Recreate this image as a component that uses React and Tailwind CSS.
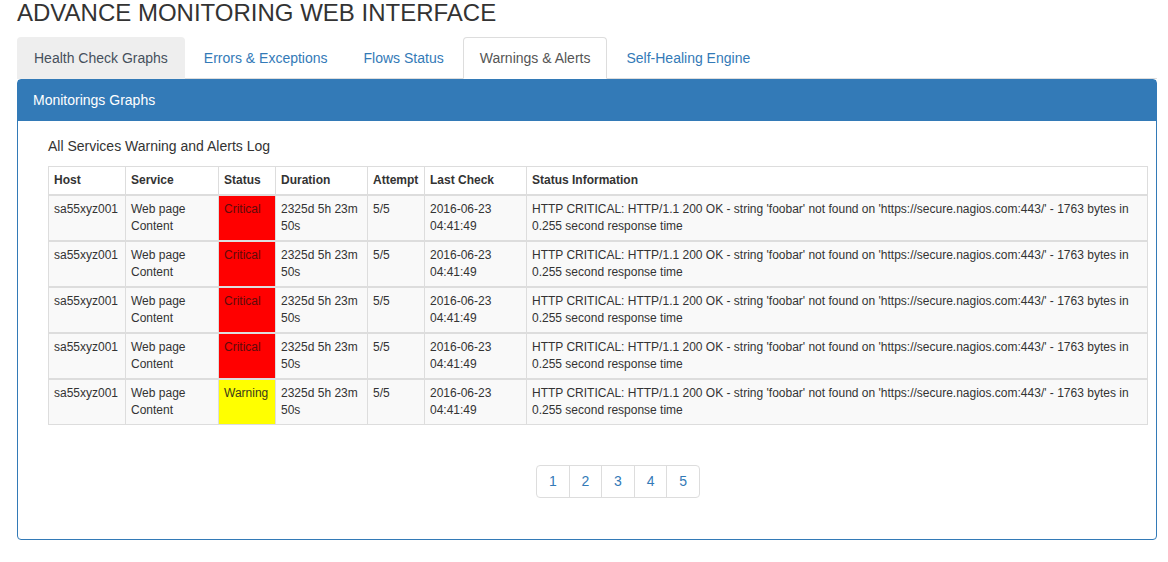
import React from "react";

// ===== Data =====
const tabs = [
  { name: "Health Check Graphs", state: "hover" },
  { name: "Errors & Exceptions" },
  { name: "Flows Status" },
  { name: "Warnings & Alerts", state: "active" },
  { name: "Self-Healing Engine" },
];

const columns = [
  { label: "Host", w: "w-[77px]" },
  { label: "Service", w: "w-[93px]" },
  { label: "Status", w: "w-[57px]" },
  { label: "Duration", w: "w-[92px]" },
  { label: "Attempt", w: "w-[57px]" },
  { label: "Last Check", w: "w-[102px]" },
  { label: "Status Information", w: "" },
];

const info =
  "HTTP CRITICAL: HTTP/1.1 200 OK - string 'foobar' not found on 'https://secure.nagios.com:443/' - 1763 bytes in 0.255 second response time";

const rows = [
  { status: "Critical" },
  { status: "Critical" },
  { status: "Critical" },
  { status: "Critical" },
  { status: "Warning" },
];

const Tab = ({ name, state }) => {
  if (state === "active") {
    return (
      <li className="mr-[2px] -mb-px">
        <div className="px-[16px] py-[10px] leading-5 bg-white text-[#555] border border-[#ddd] border-b-transparent rounded-t">
          {name}
        </div>
      </li>
    );
  }
  return (
    <li className="mr-[2px] -mb-px">
      <div
        className={`px-[16px] py-[10px] leading-5 border border-transparent rounded-t ${
          state === "hover" ? "bg-[#eee] text-[#46505c]" : "text-[#337ab7]"
        }`}
      >
        {name}
      </div>
    </li>
  );
};

export default function App() {
  return (
    <div
      className="bg-white min-h-[562px] pl-[17px] text-[14px] text-[#333]"
      style={{ fontFamily: '"Liberation Sans", Arial, sans-serif' }}
    >
      <h1 className="text-[24px] leading-[1.1] font-normal mb-[11px]">
        ADVANCE MONITORING WEB INTERFACE
      </h1>

      {/* Tabs */}
      <ul className="flex w-[1140px] border-b border-[#ddd]">
        {tabs.map((t) => (
          <Tab key={t.name} {...t} />
        ))}
      </ul>

      {/* Panel */}
      <div className="w-[1140px] border border-[#337ab7] rounded">
        <div className="bg-[#337ab7] text-white px-[15px] py-[10px] leading-5 border-b border-[#337ab7]">
          Monitorings Graphs
        </div>
        <div className="pt-[15px] pb-[41px] pl-[30px]">
          <div className="leading-5 mb-[10px]">All Services Warning and Alerts Log</div>

          <table className="w-[1100px] table-fixed border-collapse text-[12px] leading-[17px]">
            <thead>
              <tr className="bg-white">
                {columns.map((c) => (
                  <th
                    key={c.label}
                    className={`${c.w} text-left font-bold px-[5px] py-[5px] border border-[#ddd] border-b-2`}
                  >
                    {c.label}
                  </th>
                ))}
              </tr>
            </thead>
            <tbody>
              {rows.map((r, i) => (
                <tr key={i} className="bg-[#f9f9f9] align-top">
                  <td className="px-[5px] py-[5px] border border-[#ddd] border-t-2">sa55xyz001</td>
                  <td className="px-[5px] py-[5px] border border-[#ddd] border-t-2">Web page Content</td>
                  <td
                    className={`px-[5px] py-[5px] border border-[#ddd] border-t-2 ${
                      r.status === "Critical" ? "bg-[#ff0000] text-[#5e0b0b]" : "bg-[#ffff00] text-[#3a3a1a]"
                    }`}
                  >
                    {r.status}
                  </td>
                  <td className="px-[5px] py-[5px] border border-[#ddd] border-t-2">2325d 5h 23m 50s</td>
                  <td className="px-[5px] py-[5px] border border-[#ddd] border-t-2">5/5</td>
                  <td className="px-[5px] py-[5px] border border-[#ddd] border-t-2">2016-06-23 04:41:49</td>
                  <td className="px-[5px] py-[5px] border border-[#ddd] border-t-2">{info}</td>
                </tr>
              ))}
            </tbody>
          </table>

          {/* Pagination */}
          <ul className="flex mt-[40px] ml-[488px]">
            {[1, 2, 3, 4, 5].map((n, i) => (
              <li key={n}>
                <div
                  className={`w-[33.6px] h-[33px] flex items-center justify-center text-[#337ab7] border border-[#ddd] ${
                    i > 0 ? "-ml-px" : "rounded-l"
                  } ${i === 4 ? "rounded-r" : ""}`}
                >
                  {n}
                </div>
              </li>
            ))}
          </ul>
        </div>
      </div>
    </div>
  );
}
